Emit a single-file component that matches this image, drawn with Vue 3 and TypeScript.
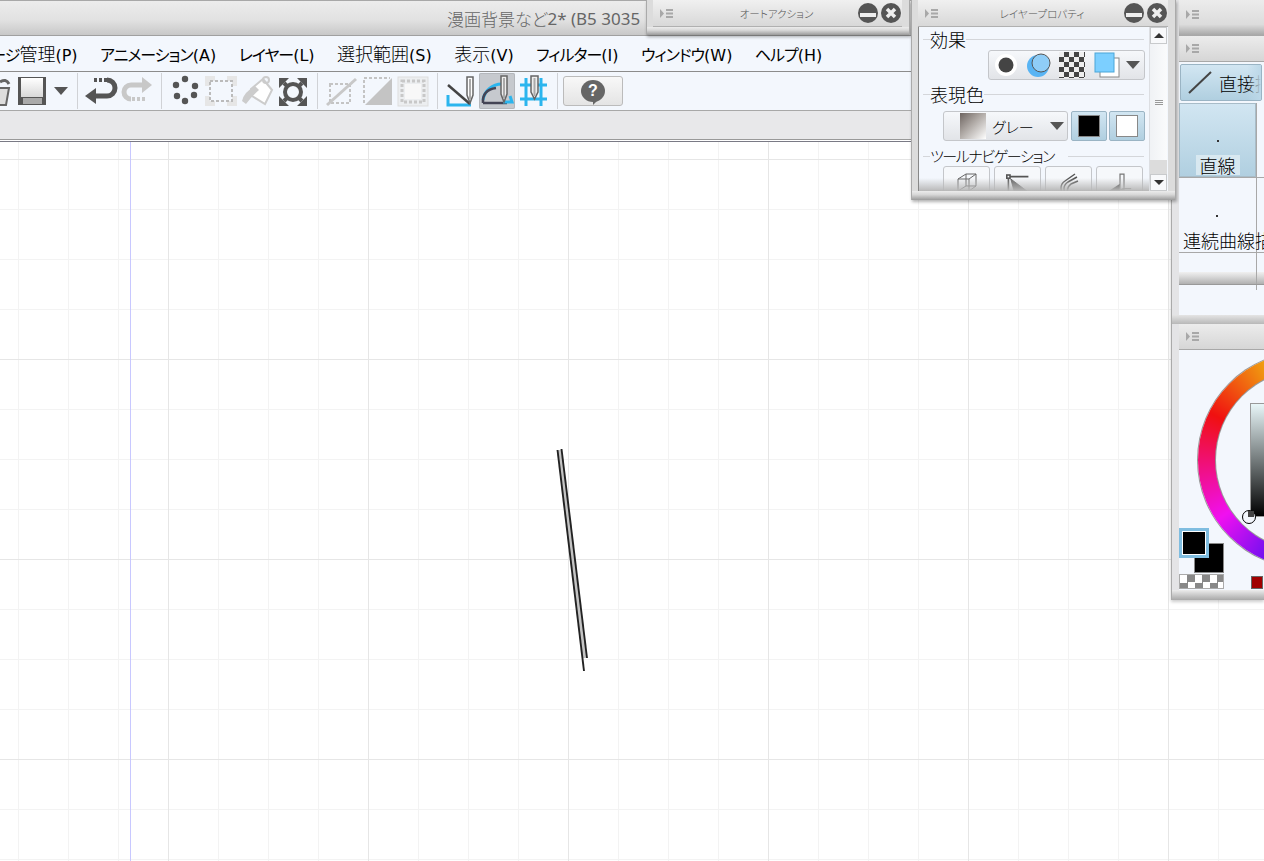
<template>
  <div class="app">
    <div class="window">
      <div class="titlebar"><span class="title-jp">漫画背景など</span><span class="title-latin">2* (B5 3035</span></div>
      <nav class="menubar">
        <span v-for="item in menuItems" :key="item.key" class="menu-item">{{ item.pre }}<span class="kanji">{{ item.kanji }}</span><span class="latin">{{ item.key }}</span></span>
      </nav>
      <div class="toolbar">
        <div class="group first">
          <div class="tool">
            <svg viewBox="0 0 36 36"><path d="M11 15H31L28 32H13Z" fill="#ddd" stroke="#666" stroke-width="2" /><path d="M22 9q6-4 9 2" fill="none" stroke="#666" stroke-width="3" /></svg>
          </div>
          <div class="tool">
            <svg viewBox="0 0 36 36">
              <defs><linearGradient id="floppy" x1="0" y1="0" x2="0" y2="1"><stop offset="0" stop-color="#fff" /><stop offset="1" stop-color="#d8d8d8" /></linearGradient></defs>
              <rect x="4" y="4" width="28" height="28" fill="#555" />
              <rect x="7" y="5" width="22" height="19" fill="url(#floppy)" />
              <rect x="9" y="25" width="19" height="6" fill="#aaa" />
            </svg>
          </div>
          <div class="drop"><i class="tri"></i></div>
        </div>
        <div class="group">
          <div class="tool">
            <svg viewBox="0 0 36 36"><path d="M2 23L13 15V31Z" fill="#555" /><path d="M11 23H24a8 8 0 0 0 0-16" fill="none" stroke="#555" stroke-width="5" /><path d="M11 7H24" stroke="#555" stroke-width="4" stroke-dasharray="3 2" /></svg>
          </div>
          <div class="tool">
            <svg viewBox="0 0 36 36"><path d="M33 12L23 4V20Z" fill="#c8c8c8" /><path d="M24 12H12a7 7 0 0 0 0 14" fill="none" stroke="#c8c8c8" stroke-width="5" /><path d="M13 26H27" stroke="#c8c8c8" stroke-width="4" stroke-dasharray="3 2" /></svg>
          </div>
        </div>
        <div class="group">
          <div class="tool">
            <svg viewBox="0 0 36 36" fill="#555"><circle cx="18" cy="6" r="3.200" /><circle cx="9" cy="12" r="3.200" /><circle cx="28" cy="13" r="3.200" /><circle cx="10" cy="23" r="3.200" /><circle cx="27" cy="22" r="3.200" /><circle cx="18" cy="28" r="3.200" /></svg>
          </div>
          <div class="tool">
            <svg viewBox="0 0 36 36"><path d="M2 3H34V33H2Z" fill="#e6e6e6" /><rect x="12" y="3" width="12" height="30" fill="#f3f7fd" /><rect x="2" y="13" width="32" height="10" fill="#f3f7fd" /><rect x="7" y="8" width="22" height="20" fill="#f3f7fd" stroke="#bbb" stroke-width="2" stroke-dasharray="3 2" /></svg>
          </div>
          <div class="tool">
            <svg viewBox="0 0 36 36"><path d="M12 16L24 6L33 17L26 31L13 23Z" fill="#fff" stroke="#ccc" stroke-width="2" /><path d="M3 28Q5 19 16 13L20 17Q12 24 7 31Z" fill="#ccc" /><circle cx="27" cy="7" r="3" fill="none" stroke="#ccc" stroke-width="2" /></svg>
          </div>
          <div class="tool">
            <svg viewBox="0 0 36 36"><circle cx="18" cy="19" r="8" fill="none" stroke="#555" stroke-width="4" /><path d="M9 10L13 14M27 10L23 14M9 28L13 24M27 28L23 24" stroke="#555" stroke-width="4" /><path d="M4 5H14L4 15ZM32 5H22L32 15ZM4 33H14L4 23ZM32 33H22L32 23Z" fill="#555" /></svg>
          </div>
        </div>
        <div class="group">
          <div class="tool">
            <svg viewBox="0 0 36 36"><rect x="7" y="11" width="20" height="19" fill="none" stroke="#c4c4c4" stroke-width="2" stroke-dasharray="3 2" /><path d="M4 32L33 6" stroke="#c8c8c8" stroke-width="3" /></svg>
          </div>
          <div class="tool">
            <svg viewBox="0 0 36 36"><path d="M33 5V32H6Z" fill="#c4c4c4" /><path d="M5 30V5H31" fill="none" stroke="#c4c4c4" stroke-width="2" stroke-dasharray="3 2" /></svg>
          </div>
          <div class="tool">
            <svg viewBox="0 0 36 36"><rect x="3" y="4" width="30" height="29" fill="#eceef0" stroke="#ddd" /><rect x="10" y="11" width="16" height="15" fill="#f8f8f8" /><rect x="7" y="8" width="22" height="21" fill="none" stroke="#c8c8c8" stroke-width="3" stroke-dasharray="3 2" /></svg>
          </div>
        </div>
        <div class="group">
          <div class="tool">
            <svg viewBox="0 0 36 36"><path d="M5 22V32H28" fill="none" stroke="#2bb5ee" stroke-width="3" /><path d="M5 12L27 31" stroke="#444" stroke-width="2.500" /><path d="M24 4H30V22L27 30L24 22Z" fill="#fff" stroke="#666" stroke-width="1.500" /><path d="M27 6V27" stroke="#aaa" stroke-width="2" /></svg>
          </div>
          <div class="tool active">
            <svg viewBox="0 0 36 36"><path d="M4 27A19 19 0 0 1 23 11" fill="none" stroke="#2bb5ee" stroke-width="3" /><path d="M4 30Q3 17 17 15" fill="none" stroke="#445" stroke-width="2.500" /><path d="M4 30H28" stroke="#445" stroke-width="2.500" /><path d="M24 29H33L31 23" fill="none" stroke="#2bb5ee" stroke-width="3" /><path d="M22 3H28V21L25 29L22 21Z" fill="#eee" stroke="#666" stroke-width="1.500" /><path d="M25 5V25" stroke="#aaa" stroke-width="2" /></svg>
          </div>
          <div class="tool">
            <svg viewBox="0 0 36 36"><path d="M5 12H32M5 26H32M11 5V33M26 5V33" stroke="#2bb5ee" stroke-width="3" fill="none" /><path d="M16 3H23V19L19.500 26L16 19Z" fill="#eee" stroke="#666" stroke-width="1.500" /><path d="M19.500 5V23" stroke="#aaa" stroke-width="2" /></svg>
          </div>
        </div>
        <button class="help-btn"><span class="bubble">?</span></button>
      </div>
      <div class="commandbar"></div>
      <div class="canvas">
        <div class="guide"></div>
        <svg class="stroke" viewBox="0 0 60 240" width="60" height="240">
          <path d="M19.500 10L45 218" stroke="#c4c4c4" stroke-width="4.500" fill="none" />
          <path d="M17.500 10L44 231" stroke="#222" stroke-width="1.900" fill="none" />
          <path d="M21.500 9L47 218" stroke="#222" stroke-width="1.900" fill="none" />
        </svg>
      </div>
    </div>

    <aside class="dock">
      <div class="dock-head tall">
        <svg class="grip" viewBox="0 0 13 11"><path d="M0 1L4 5.500L0 10Z" /><path d="M6 1H13V3H6ZM6 4.500H13V6.500H6ZM6 8H13V10H6Z" /></svg>
      </div>
      <div class="dock-head">
        <svg class="grip" viewBox="0 0 13 11"><path d="M0 1L4 5.500L0 10Z" /><path d="M6 1H13V3H6ZM6 4.500H13V6.500H6ZM6 8H13V10H6Z" /></svg>
      </div>
      <div class="subtool">
        <div class="subtool-btn">
          <svg viewBox="0 0 26 24" width="26" height="24"><path d="M2 22L24 1" stroke="#444" stroke-width="2" /></svg>
          <span>直接描画</span>
        </div>
        <div class="subtool-list">
          <div v-for="row in toolRows" :key="row.name" class="tool-row" :class="{ on: row.on }">
            <div class="tool-cell">
              <i class="pt"></i>
              <span>{{ row.name }}</span>
            </div>
          </div>
          <div class="tool-row empty"><div class="tool-cell"></div></div>
          <div class="list-foot"></div>
        </div>
        <div class="subtool-rest"></div>
      </div>
      <div class="dock-bevel"></div>
      <div class="dock-head">
        <svg class="grip" viewBox="0 0 13 11"><path d="M0 1L4 5.500L0 10Z" /><path d="M6 1H13V3H6ZM6 4.500H13V6.500H6ZM6 8H13V10H6Z" /></svg>
      </div>
      <div class="color-panel">
        <div class="wheel"><div class="wheel-hole"></div></div>
        <div class="sv-box"></div>
        <div class="sv-mark"><i></i></div>
        <div class="bg-swatch"></div>
        <div class="fg-swatch"><i></i></div>
        <div class="clear-swatch"></div>
        <div class="red-swatch"></div>
      </div>
      <div class="dock-bevel foot"></div>
    </aside>

    <section class="float auto-action">
      <header class="float-title">
        <svg class="grip" viewBox="0 0 13 11"><path d="M0 1L4 5.500L0 10Z" /><path d="M6 1H13V3H6ZM6 4.500H13V6.500H6ZM6 8H13V10H6Z" /></svg>
        <span class="float-name">オートアクション</span>
        <span class="win-btn">
          <svg viewBox="0 0 22 22"><circle cx="11" cy="11" r="10" fill="#555" /><rect x="3" y="11" width="16" height="4" fill="#eee" /></svg>
        </span>
        <span class="win-btn">
          <svg viewBox="0 0 22 22"><circle cx="11" cy="11" r="10" fill="#555" /><path d="M7 7L15 15M15 7L7 15" stroke="#eee" stroke-width="3.500" /></svg>
        </span>
      </header>
      <div class="float-bottom"></div>
    </section>

    <section class="float layer-props">
      <header class="float-title">
        <svg class="grip" viewBox="0 0 13 11"><path d="M0 1L4 5.500L0 10Z" /><path d="M6 1H13V3H6ZM6 4.500H13V6.500H6ZM6 8H13V10H6Z" /></svg>
        <span class="float-name">レイヤープロパティ</span>
        <span class="win-btn">
          <svg viewBox="0 0 22 22"><circle cx="11" cy="11" r="10" fill="#555" /><rect x="3" y="11" width="16" height="4" fill="#eee" /></svg>
        </span>
        <span class="win-btn">
          <svg viewBox="0 0 22 22"><circle cx="11" cy="11" r="10" fill="#555" /><path d="M7 7L15 15M15 7L7 15" stroke="#eee" stroke-width="3.500" /></svg>
        </span>
      </header>
      <div class="props-body">
        <div class="props-content">
          <div class="legend"><span>効果</span></div>
          <div class="effect-row">
            <div class="effect-bar">
              <span class="effect"><svg viewBox="0 0 26 26"><circle cx="13" cy="13" r="11" fill="#fff" /><circle cx="13" cy="13" r="7.500" fill="#444" /></svg></span>
              <span class="effect"><svg viewBox="0 0 26 26"><circle cx="12" cy="14" r="11" fill="#58b4f4" /><circle cx="15" cy="11" r="9" fill="#8fcdf7" stroke="#555" stroke-width="1" /></svg></span>
              <span class="effect checker"></span>
              <span class="effect square">
                <svg viewBox="0 0 26 26"><rect x="6" y="6" width="19" height="19" fill="#fff" stroke="#888" /><rect x="1" y="1" width="19" height="19" fill="#7ccfff" stroke="#4aa6d8" /></svg>
              </span>
              <i class="tri"></i>
            </div>
          </div>
          <div class="legend"><span>表現色</span></div>
          <div class="color-row">
            <div class="color-select">
              <span class="gray-swatch"></span>
              <span class="color-name">グレー</span>
              <i class="tri"></i>
            </div>
            <div class="color-btn"><i class="black"></i></div>
            <div class="color-btn"><i class="white"></i></div>
          </div>
          <div class="legend small"><span>ツールナビゲーション</span></div>
          <div class="nav-row">
            <div class="nav-btn">
              <svg viewBox="0 0 24 24" fill="none" stroke="#666"><path d="M3 8L11 3H21V15L14 20H3ZM3 8H14V20M14 8L21 3M3 20L11 15H21M11 3V15" /></svg>
            </div>
            <div class="nav-btn">
              <svg viewBox="0 0 30 24" fill="none" stroke="#555"><rect x="1" y="2" width="4" height="4" stroke-width="2" /><path d="M5 4H28M3 6V24" stroke-width="2" /><path d="M6 7L26 22H10Z" fill="#666" /></svg>
            </div>
            <div class="nav-btn">
              <svg viewBox="0 0 24 24" fill="none" stroke="#555" stroke-width="1.500"><path d="M5 22Q2 14 8 10L18 3M8 22Q5 15 11 11L20 6M11 22Q9 17 14 13L21 10" /></svg>
            </div>
            <div class="nav-btn">
              <svg viewBox="0 0 30 24"><path d="M1 22L15 13V24H1Z" fill="#444" /><path d="M15 1H20V20H15ZM18 19H29" fill="none" stroke="#777" stroke-width="1.500" /></svg>
            </div>
          </div>
          <div class="props-fade"></div>
        </div>
        <div class="scrollbar">
          <div class="scroll-btn"><i class="tri small up"></i></div>
          <div class="scroll-thumb"><b></b><b></b><b></b></div>
          <div class="scroll-track"></div>
          <div class="scroll-btn"><i class="tri small"></i></div>
        </div>
      </div>
      <div class="float-bottom"></div>
    </section>
  </div>
</template>

<script setup lang="ts">
interface MenuItem {
  pre: string;
  kanji: string;
  key: string;
}

interface ToolRow {
  name: string;
  on: boolean;
}

// kanji are set larger than the kana, like the narrow kana of the original UI font
const menuItems: MenuItem[] = [
  { pre: 'ページ', kanji: '管理', key: '(P)' },
  { pre: 'アニメーション', kanji: '', key: '(A)' },
  { pre: 'レイヤー', kanji: '', key: '(L)' },
  { pre: '', kanji: '選択範囲', key: '(S)' },
  { pre: '', kanji: '表示', key: '(V)' },
  { pre: 'フィルター', kanji: '', key: '(I)' },
  { pre: 'ウィンドウ', kanji: '', key: '(W)' },
  { pre: 'ヘルプ', kanji: '', key: '(H)' },
];

const toolRows: ToolRow[] = [
  { name: '直線', on: true },
  { name: '連続曲線描画', on: false },
];
</script>

<style>
html,
body {
  margin: 0;
  background: #fff;
}
</style>

<style scoped>
.app {
  position: relative;
  width: 1264px;
  height: 861px;
  overflow: hidden;
  background: #fff;
  font-family: "Noto Sans CJK JP", "DejaVu Sans", sans-serif;
  font-feature-settings: "palt";
  color: #000;
}

.window {
  display: flex;
  flex-direction: column;
  height: 100%;
}

.titlebar {
  height: 34px;
  border-top: 1px solid #a8a8a8;
  border-bottom: 1px solid #a0a0a0;
  background: linear-gradient(#ececec, #e2e2e2 55%, #c8c8c8);
  display: flex;
  align-items: center;
  padding-left: 447px;
  color: #666;
  white-space: nowrap;
}

.title-jp {
  font-size: 17px;
  font-weight: 300;
}

.title-latin {
  font-family: "Noto Sans", sans-serif;
  font-size: 17px;
}

.menubar {
  height: 35px;
  background: #f3f7fd;
  border-bottom: 1px solid #8c8c8c;
  display: flex;
  align-items: center;
  gap: 22.500px;
  margin-left: -25px;
  white-space: nowrap;
}

.menu-item {
  font-size: 16px;
  letter-spacing: -1px;
}

.kanji {
  font-size: 18px;
  line-height: 1;
  letter-spacing: 0;
  font-weight: 300;
}

.latin {
  font-family: "DejaVu Sans", sans-serif;
  font-size: 16px;
  letter-spacing: 0;
}

.toolbar {
  height: 38px;
  background: #f3f7fd;
  border-bottom: 1px solid #a8a8a8;
  display: flex;
  align-items: center;
}

.group {
  display: flex;
  align-items: center;
  height: 36px;
  padding: 0 6px 0 5px;
  border-right: 1px solid #d0d2d6;
  box-sizing: content-box;
}

.group.first {
  margin-left: -22px;
  padding-left: 0;
}

.tool {
  width: 36px;
  height: 36px;
  flex: none;
  box-sizing: border-box;
}

.tool svg {
  display: block;
  width: 36px;
  height: 36px;
}

.tool.active {
  background: #c6c9ce;
  box-shadow: inset 0 0 0 1px #b4b7bc;
  border-radius: 2px;
}

.drop {
  width: 21px;
  display: flex;
  justify-content: center;
}

.tri {
  display: block;
  width: 0;
  height: 0;
  border-left: 7px solid transparent;
  border-right: 7px solid transparent;
  border-top: 8px solid #555;
}

.tri.small {
  border-left-width: 5px;
  border-right-width: 5px;
  border-top: 5px solid #333;
}

.tri.up {
  border-top: 0;
  border-bottom: 5px solid #333;
}

.help-btn {
  width: 60px;
  height: 30px;
  margin-left: 5px;
  padding: 0;
  border: 1px solid #bbb;
  border-radius: 3px;
  background: linear-gradient(#f8f8f8, #e4e4e4);
  display: flex;
  align-items: center;
  justify-content: center;
}

.bubble {
  position: relative;
  width: 24px;
  height: 22px;
  border-radius: 50%;
  background: #666;
  color: #fff;
  font: bold 16px/22px "Liberation Sans", sans-serif;
  text-align: center;
}

.bubble::after {
  content: "";
  position: absolute;
  left: 12px;
  top: 19px;
  border-top: 6px solid #666;
  border-right: 6px solid transparent;
}

.commandbar {
  height: 28px;
  background: #e8e8ea;
  border-bottom: 1px solid #999;
}

.canvas {
  flex: 1;
  position: relative;
  border-top: 1px solid #fff;
  box-shadow: inset 0 1px 0 #7a7a85;
  background-color: #fff;
  background-image:
    linear-gradient(to right, #e6e6e6 1px, transparent 1px),
    linear-gradient(to bottom, #e6e6e6 1px, transparent 1px),
    linear-gradient(to right, #f3f3f3 1px, transparent 1px),
    linear-gradient(to bottom, #f3f3f3 1px, transparent 1px);
  background-size: 200px 200px, 200px 200px, 50px 50px, 50px 50px;
  background-position: 168px 0, 0 18px, 18px 0, 0 18px;
}

.guide {
  position: absolute;
  left: 130px;
  top: 1px;
  bottom: 0;
  width: 1px;
  background: #c8c8ff;
}

.stroke {
  position: absolute;
  left: 540px;
  top: 299px;
}

.float {
  position: absolute;
  top: 0;
  display: flex;
  flex-direction: column;
  box-sizing: border-box;
  background: #dcdcdc;
  padding: 0 7px 0 6px;
  box-shadow: 1px 2px 3px rgba(0, 0, 0, 0.3);
  border-left: 1px solid #aaa;
  border-right: 1px solid #aaa;
}

.auto-action {
  left: 646px;
  width: 264px;
  height: 35px;
}

.layer-props {
  left: 911px;
  width: 265px;
  height: 200px;
}

.float-title {
  height: 27px;
  flex: none;
  display: flex;
  align-items: center;
  box-sizing: border-box;
  padding-left: 7px;
  border-bottom: 1px solid #b0b0b0;
  background: linear-gradient(#f0f0f0, #d8d8d8);
}

.grip {
  width: 13px;
  height: 11px;
  fill: #a8a8a8;
  flex: none;
}

.float-name {
  flex: 1;
  text-align: center;
  font-size: 10.500px;
  color: #555;
  padding-left: 23px;
  font-weight: 300;
}

.win-btn {
  width: 23px;
  height: 22px;
  flex: none;
}

.win-btn:last-child {
  margin-right: -1px;
}

.win-btn svg {
  display: block;
  width: 22px;
  height: 22px;
}

.float-bottom {
  flex: 1;
  margin: 0 -7px 0 -6px;
  background: linear-gradient(#ececec, #d8d8d8 40%, #9a9a9a);
}

.props-body {
  height: 164px;
  flex: none;
  display: flex;
  border: 1px solid #888;
  border-width: 0 0 0 1px;
  background: #f3f7fd;
}

.props-content {
  position: relative;
  width: 230px;
  flex: none;
  overflow: hidden;
  padding-top: 2px;
  box-sizing: border-box;
}

.legend {
  display: flex;
  align-items: center;
  height: 20px;
  font-size: 18px;
  font-weight: 300;
  line-height: 20px;
  padding-left: 11px;
  margin-right: 5px;
  background: linear-gradient(#d4d6da, #d4d6da) 4px 50% / calc(100% - 4px) 1px no-repeat;
}

.legend span {
  background: #f3f7fd;
}

.legend.small {
  font-size: 15px;
  letter-spacing: -1.400px;
}

.legend.small span {
  padding-right: 14px;
}

.effect-row {
  display: flex;
  justify-content: flex-end;
  padding: 1px 4px 4px 0;
}

.effect-bar {
  width: 157px;
  height: 30px;
  box-sizing: border-box;
  display: flex;
  align-items: center;
  padding-left: 4px;
  gap: 7px;
  border: 1px solid #c4c6ca;
  border-radius: 3px;
  background: linear-gradient(#f6f8fb, #e2e4e8);
}

.effect {
  width: 26px;
  height: 26px;
  flex: none;
}

.effect svg {
  display: block;
  width: 26px;
  height: 26px;
}

.checker {
  background: conic-gradient(#444 25%, #eee 0 50%, #444 0 75%, #eee 0) 0 0 / 10px 10px;
}

.effect.square {
  margin-left: 2px;
}

.effect-bar .tri {
  margin-left: -1px;
}

.color-row {
  display: flex;
  padding: 7px 0 0 24px;
  gap: 2px;
  height: 30px;
  margin-bottom: 5px;
}

.color-select {
  width: 125px;
  height: 30px;
  margin-right: 1px;
  box-sizing: border-box;
  border: 1px solid #c4c6ca;
  border-radius: 3px;
  background: linear-gradient(#f6f8fb, #e2e4e8);
  display: flex;
  align-items: center;
  padding-left: 16px;
}

.gray-swatch {
  width: 26px;
  height: 26px;
  background: linear-gradient(135deg, #6d6460, #b0aaa6 45%, #fff);
}

.color-name {
  font-size: 15px;
  font-weight: 300;
  margin-left: 6px;
  width: 58px;
}

.color-btn {
  width: 36px;
  height: 30px;
  box-sizing: border-box;
  border: 1px solid #9ab4c4;
  border-radius: 2px;
  background: linear-gradient(#d2e6f2, #b0cfe0);
  display: flex;
  align-items: center;
  justify-content: center;
}

.color-btn i {
  width: 20px;
  height: 20px;
  border: 1px solid #888;
}

.black {
  background: #000;
}

.white {
  background: #fff;
}

.nav-row {
  display: flex;
  gap: 4px;
  padding: 0 0 0 24px;
}

.nav-btn {
  width: 47px;
  height: 34px;
  flex: none;
  box-sizing: border-box;
  border: 1px solid #c4c6ca;
  border-radius: 3px;
  background: #f6f8fb;
  display: flex;
  justify-content: center;
  padding-top: 4px;
}

.nav-btn svg {
  width: 24px;
  height: 24px;
}

.props-fade {
  position: absolute;
  left: 0;
  right: 0;
  bottom: 0;
  height: 13px;
  background: linear-gradient(rgba(220, 222, 226, 0), #b8b8b8);
}

.scrollbar {
  width: 18px;
  flex: none;
  display: flex;
  flex-direction: column;
  border-left: 1px solid #dcdee2;
  box-sizing: border-box;
}

.scroll-btn {
  height: 17px;
  flex: none;
  box-sizing: border-box;
  border: 1px solid #c8cacc;
  background: #f8f9fb;
  display: flex;
  align-items: center;
  justify-content: center;
}

.scroll-thumb {
  height: 116px;
  flex: none;
  background: linear-gradient(to right, #f0f2f5, #fafbfc);
  display: flex;
  flex-direction: column;
  align-items: center;
  justify-content: center;
  gap: 1px;
}

.scroll-thumb b {
  display: block;
  width: 8px;
  height: 1px;
  background: #999;
}

.scroll-track {
  flex: 1;
  background: #dcdcdc;
}

.dock {
  position: absolute;
  left: 1171px;
  top: 0;
  width: 93px;
  height: 600px;
  box-sizing: border-box;
  border-left: 1px solid #aaa;
  padding-left: 7px;
  background: #e4e4e6;
  display: flex;
  flex-direction: column;
  box-shadow: 0 2px 3px rgba(0, 0, 0, 0.2);
}

.dock-head {
  height: 26px;
  flex: none;
  box-sizing: border-box;
  display: flex;
  align-items: center;
  padding-left: 7px;
  border-bottom: 1px solid #a8a8a8;
  background: linear-gradient(#ececec, #d6d6d6);
}

.dock-head.tall {
  height: 36px;
  padding-bottom: 6px;
  background: linear-gradient(#ececec, #dcdcdc 70%, #a8a8a8);
}

.subtool {
  height: 253px;
  flex: none;
  display: flex;
  flex-direction: column;
  background: #f3f7fd;
  padding: 2px 0 0 1px;
  box-sizing: border-box;
  overflow: hidden;
}

.subtool-btn {
  position: relative;
  width: 82px;
  height: 37px;
  flex: none;
  box-sizing: border-box;
  border: 1px solid #9ab4c4;
  border-radius: 2px;
  background: linear-gradient(#d2e6f2, #b0cfe0);
  display: flex;
  align-items: center;
  padding-left: 6px;
  gap: 6px;
  font-size: 18px;
  font-weight: 300;
  white-space: nowrap;
  overflow: hidden;
}

.subtool-btn svg {
  flex: none;
}

.subtool-btn::after {
  content: "";
  position: absolute;
  right: 0;
  top: 0;
  bottom: 0;
  width: 14px;
  background: linear-gradient(to right, rgba(190, 218, 234, 0), #bcd8e8);
}

.subtool-list {
  margin-top: 2px;
  margin-left: -1px;
  flex: none;
}

.tool-row {
  height: 75px;
  box-sizing: border-box;
  border-bottom: 1px solid #a8a8a8;
}

.tool-row.empty {
  height: 19px;
  border-bottom: 0;
}

.tool-cell {
  width: 78px;
  height: 100%;
  box-sizing: border-box;
  border-right: 1px solid #a8a8a8;
  display: flex;
  flex-direction: column;
  align-items: center;
  white-space: nowrap;
  font-size: 18px;
  font-weight: 300;
  line-height: 20px;
  padding-top: 37px;
}

.tool-row:nth-child(2) .tool-cell {
  align-items: flex-start;
  padding-left: 4px;
}

.tool-row:nth-child(2) .pt {
  margin-left: 33px;
}

.tool-row.on .tool-cell {
  background: linear-gradient(#d2e6f2, #b0cfe0);
  box-shadow: inset 0 0 0 1px #a8bcc8;
}

.tool-row.on span {
  background: #d8e8f0;
  padding: 0 4px;
}

.pt {
  width: 2px;
  height: 2px;
  background: #333;
  margin-bottom: 13px;
}

.list-foot {
  height: 12px;
  border-bottom: 1px solid #999;
  background:
    linear-gradient(#a8a8a8, #a8a8a8) 77px 0 / 1px 100% no-repeat,
    linear-gradient(#f0f0f0, #d8d8d8 40%, #b0b0b0);
}

.subtool-rest {
  flex: 1;
}

.dock-bevel {
  height: 9px;
  flex: none;
  margin-left: -7px;
  background: linear-gradient(#e4e4e4, #b8b8b8);
}

.dock-bevel.foot {
  height: 10px;
  background: linear-gradient(#ececec, #a8a8a8);
}

.color-panel {
  position: relative;
  height: 240px;
  flex: none;
  background: #f3f7fd;
  overflow: hidden;
}

.wheel {
  position: absolute;
  left: 19px;
  top: 2px;
  width: 216px;
  height: 216px;
  border-radius: 50%;
  background: conic-gradient(from 296deg, #f01010, #f0e010, #10e010, #10e0e0, #1010f0, #f010f0, #f01010);
  box-shadow: 0 0 0 1px #999;
}

.wheel-hole {
  position: absolute;
  inset: 18px;
  border-radius: 50%;
  background: #f3f7fd;
  box-shadow: 0 0 0 1px #999;
}

.sv-box {
  position: absolute;
  left: 71px;
  top: 53px;
  width: 60px;
  height: 114px;
  background: linear-gradient(#e8f6f8, #000);
  border: 1px solid #999;
  box-sizing: border-box;
}

.sv-mark {
  position: absolute;
  left: 63px;
  top: 160px;
  width: 14px;
  height: 14px;
  box-sizing: border-box;
  border: 1.500px solid #000;
  border-radius: 50%;
  background: #f3f7fd;
}

.sv-mark i {
  position: absolute;
  left: 5px;
  top: 0;
  width: 6px;
  height: 6px;
  background: #444;
}

.fg-swatch {
  position: absolute;
  left: 0;
  top: 178px;
  width: 30px;
  height: 30px;
  box-sizing: border-box;
  border: 3px solid #7fbde0;
  background: #fff;
  padding: 1px;
}

.fg-swatch i {
  display: block;
  width: 100%;
  height: 100%;
  background: #000;
}

.bg-swatch {
  position: absolute;
  left: 15px;
  top: 193px;
  width: 30px;
  height: 30px;
  box-sizing: border-box;
  background: #000;
  border: 1px solid #888;
}

.clear-swatch {
  position: absolute;
  left: 0;
  top: 224px;
  width: 45px;
  height: 15px;
  box-sizing: border-box;
  border: 1px solid #aaa;
  background: conic-gradient(#888 25%, #fff 0 50%, #888 0 75%, #fff 0) 0 0 / 15px 15px;
}

.red-swatch {
  position: absolute;
  left: 72px;
  top: 226px;
  width: 12px;
  height: 13px;
  box-sizing: border-box;
  background: #a00000;
  border: 1px solid #666;
}
</style>
